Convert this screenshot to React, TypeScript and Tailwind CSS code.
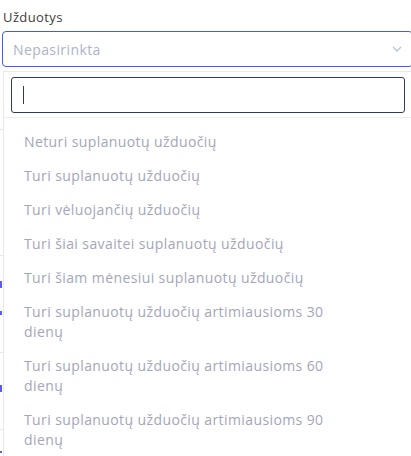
const items: string[] = [
  "Neturi suplanuotų užduočių",
  "Turi suplanuotų užduočių",
  "Turi vėluojančių užduočių",
  "Turi šiai savaitei suplanuotų užduočių",
  "Turi šiam mėnesiui suplanuotų užduočių",
  "Turi suplanuotų užduočių artimiausioms 30 dienų",
  "Turi suplanuotų užduočių artimiausioms 60 dienų",
  "Turi suplanuotų užduočių artimiausioms 90 dienų",
];

// rows of the table that sits behind the open dropdown
const rows = [
  { h: "h-[63px]", marks: [] as string[] },
  { h: "h-[126px]", marks: [] },
  { h: "h-[97px]", marks: ["mt-[25px] h-[7px]", "mt-[23px] h-[4px]"] },
  { h: "h-[77px]", marks: ["mt-[32px] h-[7px]"] },
  { h: "h-[40px]", marks: ["mt-[21px] h-[2px]"] },
];

export default function App() {
  return (
    <div className="relative h-[456px] w-[411px] overflow-hidden bg-white font-['Open_Sans',sans-serif] tracking-[0.4px]">
      <div className="pt-[7px]">
        <div className="pl-[3px] text-[13px] leading-[20px] text-[#3d3d3d]">Užduotys</div>

        <div className="ml-[2px] mt-[4px] flex h-[36px] w-[411px] items-center rounded-[4px] border border-[#3f5fe0] pl-[10px] pr-[10px]">
          <span className="flex-1 text-[14px] text-[#aab4ca]">Nepasirinkta</span>
          <svg width="10" height="6" viewBox="0 0 10 6" fill="none" stroke="#b9c3d6" strokeWidth="1.3">
            <path d="M1 1l4 4 4-4" />
          </svg>
        </div>

        <div className="flex w-[3px] flex-col">
          {rows.map((r, i) => (
            <div key={i} className={`${r.h} flex flex-col border-b border-[#e5e7eb]`}>
              {r.marks.map((m, j) => (
                <span key={j} className={`${m} w-[2px] bg-[#5b5bf0]`} />
              ))}
            </div>
          ))}
        </div>
      </div>

      {/* open dropdown */}
      <div className="absolute left-[3px] top-[71px] w-[410px] border border-[#e6e8eb] bg-white">
        <div className="border-b border-[#eceef1] px-[7px] pb-[4px] pt-[5px]">
          <div className="flex h-[36px] items-center rounded-[3px] border-[1.5px] border-[#2f3a5c] pl-[11px]">
            <span className="h-[18px] w-px bg-[#2f3a5c]" />
          </div>
        </div>
        <ul className="pt-[7px]">
          {items.map((t) => (
            <li key={t} className="w-[345px] py-[7px] pl-[20px] text-[14px] leading-[20px] text-[#a3a6b9]">
              {t}
            </li>
          ))}
        </ul>
      </div>
    </div>
  );
}
